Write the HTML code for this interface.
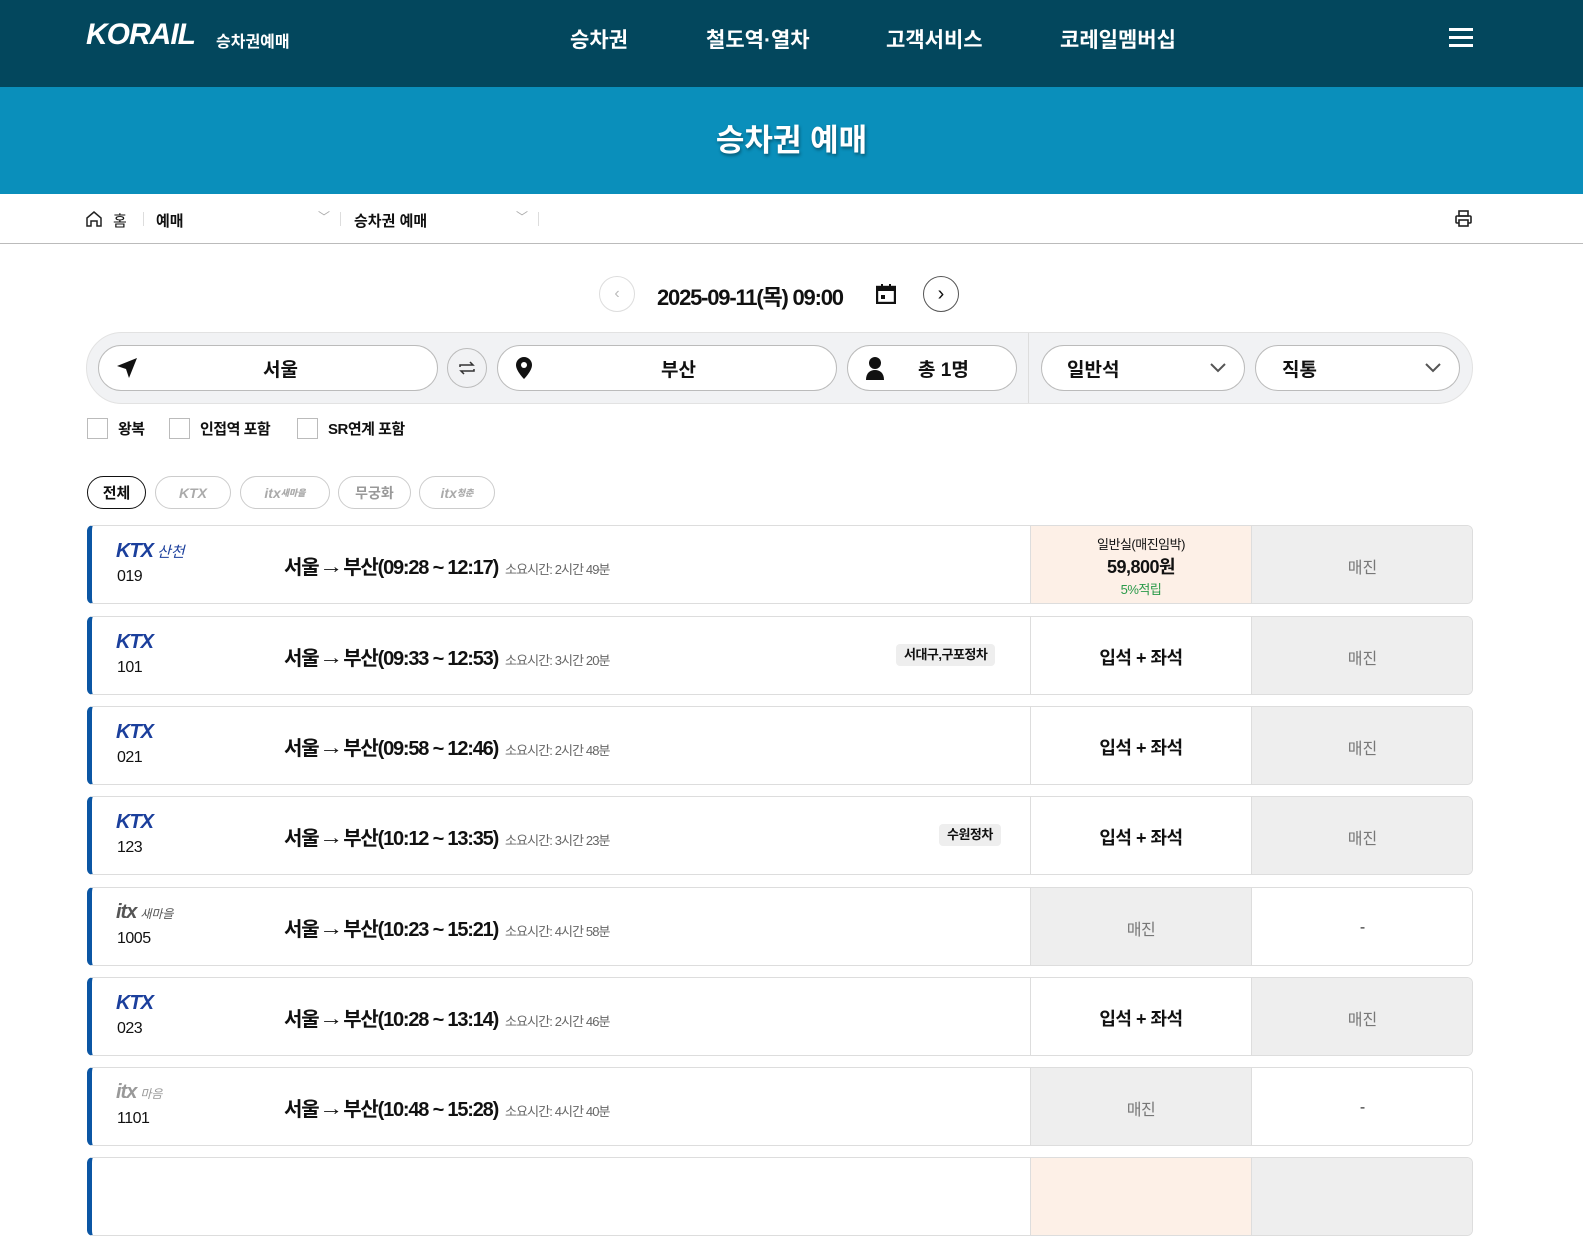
<!DOCTYPE html>
<html><head><meta charset="utf-8"><style>
*{margin:0;padding:0;box-sizing:border-box}
body{width:1583px;height:1172px;overflow:hidden;background:#fff;font-family:"Liberation Sans","Noto Sans CJK KR",sans-serif;color:#111;position:relative}
.abs{position:absolute}
.hdr{left:0;top:0;width:1583px;height:87px;background:#03475d}
.nav{top:24px;font-size:21px;font-weight:bold;color:#fff}
.band{left:0;top:87px;width:1583px;height:107px;background:#0a8fbb;color:#fff;font-size:31px;font-weight:bold;text-align:center;line-height:107px;text-shadow:1px 2px 3px rgba(0,0,0,.4)}
.bc{top:194px;left:0;width:1583px;height:50px;border-bottom:1px solid #bbb}
.bct{top:210px;font-size:15px;font-weight:bold}
.sep{width:1px;height:14px;background:#ddd;top:212px}
.circ{border:1px solid #bbb;border-radius:50%;width:36px;height:36px;display:flex;align-items:center;justify-content:center}
.pill{border:1px solid #bbb;border-radius:24px;background:#fff;height:46px;top:345px;display:flex;align-items:center;font-size:19px;font-weight:bold}
.cb{width:21px;height:21px;border:1px solid #bbb;top:418px}
.cbt{top:418px;font-size:15px;font-weight:bold;letter-spacing:-.5px}
.tag{top:476px;height:33px;border:1px solid #ccc;border-radius:17px;display:flex;align-items:center;justify-content:center;font-size:14px;color:#999;font-weight:bold}
.row{left:87px;width:1386px;height:79px;border:1px solid #ddd;border-left:5px solid #0b56a4;border-radius:6px;background:#fff;overflow:hidden}
.row .no{position:absolute;left:25px;top:42px;font-size:16px;letter-spacing:-.5px}
.row .rt{position:absolute;left:192px;top:25px;font-size:20px;font-weight:bold;letter-spacing:-1.2px}
.row .rt .ar{font-size:20px;display:inline-block;transform:translateY(-1px) scaleX(1.2);margin:0 3px}
.row .rt small{font-size:13px;color:#666;font-weight:normal;margin-left:7px;letter-spacing:-.9px}
.row .c1{position:absolute;left:938px;top:0;width:221px;height:79px;border-left:1px solid #ddd;display:flex;align-items:center;justify-content:center;font-size:18px;font-weight:bold;letter-spacing:-.5px}
.row .c2{position:absolute;left:1159px;top:0;width:222px;height:79px;background:#eee;display:flex;align-items:center;justify-content:center;font-size:16px;color:#777;border-left:1px solid #ddd}
.sold{background:#eee!important;color:#777!important;font-weight:normal!important;font-size:16px!important}
.wh{background:#fff!important;color:#333!important}
.stop{position:absolute;top:27px;height:22px;background:#eee;border-radius:4px;font-size:13px;font-weight:bold;padding:0 8px;line-height:22px;letter-spacing:-.5px}
.ktx{position:absolute;left:24px;top:14px;font:italic 900 20px "Liberation Sans",sans-serif;color:#1b3f9c;letter-spacing:-1px}
.itx{position:absolute;left:24px;top:13px;font:italic 900 20px "Liberation Sans",sans-serif;color:#555;letter-spacing:-1px}
.sub{font-size:12px;font-weight:normal;margin-left:4px;letter-spacing:0}
</style></head><body>
<div class="abs hdr"></div>
<div class="abs" style="left:86px;top:18px;font:italic 900 30px 'Liberation Sans',sans-serif;color:#fff;letter-spacing:-1px">KORAIL</div>
<div class="abs" style="left:216px;top:28px;font-size:16px;font-weight:bold;color:#fff">승차권예매</div>
<div class="abs nav" style="left:570px">승차권</div>
<div class="abs nav" style="left:706px">철도역·열차</div>
<div class="abs nav" style="left:886px">고객서비스</div>
<div class="abs nav" style="left:1060px">코레일멤버십</div>
<div class="abs" style="left:1449px;top:28px;width:24px;height:3px;background:#fff;box-shadow:0 8px 0 #fff,0 16px 0 #fff"></div>
<div class="abs band">승차권 예매</div>
<div class="abs bc"></div>
<svg class="abs" style="left:85px;top:210px" width="18" height="18" viewBox="0 0 18 18" fill="none" stroke="#222" stroke-width="1.5"><path d="M2 8L9 2l7 6v8h-4v-5H6v5H2z"/></svg>
<div class="abs bct" style="left:113px;font-weight:normal">홈</div>
<div class="abs sep" style="left:143px"></div>
<div class="abs bct" style="left:156px">예매</div>
<div class="abs" style="left:318px;top:208px;color:#aaa;font-size:12px">﹀</div>
<div class="abs sep" style="left:340px"></div>
<div class="abs bct" style="left:354px">승차권 예매</div>
<div class="abs" style="left:516px;top:208px;color:#aaa;font-size:12px">﹀</div>
<div class="abs sep" style="left:538px"></div>
<svg class="abs" style="left:1454px;top:209px" width="19" height="19" viewBox="0 0 19 19" fill="none" stroke="#222" stroke-width="1.6"><rect x="5" y="2" width="9" height="5"/><rect x="2" y="7" width="15" height="7" rx="1"/><rect x="5" y="11" width="9" height="6" fill="#fff"/></svg>

<div class="abs circ" style="left:599px;top:276px;border-color:#ddd;color:#bbb">‹</div>
<div class="abs" style="left:657px;top:280px;font-size:22px;font-weight:bold;letter-spacing:-1.2px">2025-09-11(목) 09:00</div>
<svg class="abs" style="left:876px;top:284px" width="20" height="20" viewBox="0 0 20 20"><rect x="1" y="3" width="18" height="16" fill="none" stroke="#111" stroke-width="2.4"/><rect x="1" y="3" width="18" height="4" fill="#111"/><rect x="5" y="0" width="2" height="4" fill="#111"/><rect x="13" y="0" width="2" height="4" fill="#111"/><rect x="5" y="11" width="4" height="4" fill="#111"/></svg>
<div class="abs circ" style="left:923px;top:276px;border-color:#555;font-size:20px">›</div>

<div class="abs" style="left:86px;top:332px;width:1387px;height:72px;background:#f1f2f4;border:1px solid #e2e2e2;border-radius:36px"></div>
<div class="abs" style="left:1028px;top:333px;width:1px;height:70px;background:#ddd"></div>
<div class="abs pill" style="left:98px;width:340px"><svg style="margin-left:16px" width="24" height="24" viewBox="0 0 24 24"><path d="M22 2L2 10l9 3 3 9z" fill="#111"/></svg><span style="margin-left:124px">서울</span></div>
<div class="abs circ" style="left:447px;top:348px;width:40px;height:40px"><svg width="20" height="20" viewBox="0 0 20 20" fill="none" stroke="#333" stroke-width="1.5"><path d="M3 9V7h13l-3-3M17 11v2H4l3 3"/></svg></div>
<div class="abs pill" style="left:497px;width:340px"><svg style="margin-left:14px" width="24" height="24" viewBox="0 0 24 24"><path d="M12 1a8 8 0 00-8 8c0 6 8 14 8 14s8-8 8-14a8 8 0 00-8-8z" fill="#111"/><circle cx="12" cy="9" r="3" fill="#fff"/></svg><span style="margin-left:125px">부산</span></div>
<div class="abs pill" style="left:847px;width:170px"><svg style="margin-left:16px" width="22" height="24" viewBox="0 0 22 24"><circle cx="11" cy="7" r="6" fill="#111"/><path d="M2 24c0-7 4-10 9-10s9 3 9 10z" fill="#111"/></svg><span style="margin-left:32px">총 1명</span></div>
<div class="abs pill" style="left:1041px;width:204px;padding-left:25px;justify-content:space-between;padding-right:18px;font-weight:bold"><span>일반석</span><svg width="16" height="10" viewBox="0 0 16 10" fill="none" stroke="#555" stroke-width="2"><path d="M1 1l7 7 7-7"/></svg></div>
<div class="abs pill" style="left:1255px;width:205px;padding-left:26px;justify-content:space-between;padding-right:18px"><span>직통</span><svg width="16" height="10" viewBox="0 0 16 10" fill="none" stroke="#555" stroke-width="2"><path d="M1 1l7 7 7-7"/></svg></div>

<div class="abs cb" style="left:87px"></div><div class="abs cbt" style="left:118px">왕복</div>
<div class="abs cb" style="left:169px"></div><div class="abs cbt" style="left:200px">인접역 포함</div>
<div class="abs cb" style="left:297px"></div><div class="abs cbt" style="left:328px">SR연계 포함</div>

<div class="abs tag" style="left:87px;width:59px;border-color:#111;color:#111;font-size:15px">전체</div>
<div class="abs tag" style="left:155px;width:76px;font-style:italic;font-weight:900;color:#aaa">KTX</div>
<div class="abs tag" style="left:240px;width:90px;font-style:italic;font-weight:900;color:#aaa">itx<span style="font-size:9px">새마을</span></div>
<div class="abs tag" style="left:338px;width:73px">무궁화</div>
<div class="abs tag" style="left:419px;width:76px;font-style:italic;font-weight:900;color:#aaa">itx<span style="font-size:9px">청춘</span></div>

<div class="abs row" style="top:525px"><div class="ktx">KTX<span class="sub" style="font-size:15px">산천</span></div><div class="no">019</div><div class="rt">서울<span class="ar">→</span>부산(09:28 ~ 12:17)<small>소요시간: 2시간 49분</small></div>
<div class="c1" style="background:#fdf0e7;flex-direction:column;font-weight:normal"><div style="font-size:13px">일반실(매진임박)</div><div style="font-size:18px;font-weight:bold">59,800원</div><div style="font-size:13px;color:#2a9a4a">5%적립</div></div><div class="c2">매진</div></div>

<div class="abs row" style="top:616px"><div class="ktx">KTX</div><div class="no">101</div><div class="rt">서울<span class="ar">→</span>부산(09:33 ~ 12:53)<small>소요시간: 3시간 20분</small></div><div class="stop" style="left:804px">서대구,구포정차</div><div class="c1">입석 + 좌석</div><div class="c2">매진</div></div>

<div class="abs row" style="top:706px"><div class="ktx">KTX</div><div class="no">021</div><div class="rt">서울<span class="ar">→</span>부산(09:58 ~ 12:46)<small>소요시간: 2시간 48분</small></div><div class="c1">입석 + 좌석</div><div class="c2">매진</div></div>

<div class="abs row" style="top:796px"><div class="ktx">KTX</div><div class="no">123</div><div class="rt">서울<span class="ar">→</span>부산(10:12 ~ 13:35)<small>소요시간: 3시간 23분</small></div><div class="stop" style="left:847px">수원정차</div><div class="c1">입석 + 좌석</div><div class="c2">매진</div></div>

<div class="abs row" style="top:887px"><div class="itx">itx<span class="sub">새마을</span></div><div class="no">1005</div><div class="rt">서울<span class="ar">→</span>부산(10:23 ~ 15:21)<small>소요시간: 4시간 58분</small></div><div class="c1 sold">매진</div><div class="c2 wh">-</div></div>

<div class="abs row" style="top:977px"><div class="ktx">KTX</div><div class="no">023</div><div class="rt">서울<span class="ar">→</span>부산(10:28 ~ 13:14)<small>소요시간: 2시간 46분</small></div><div class="c1">입석 + 좌석</div><div class="c2">매진</div></div>

<div class="abs row" style="top:1067px"><div class="itx" style="color:#999">itx<span class="sub">마음</span></div><div class="no">1101</div><div class="rt">서울<span class="ar">→</span>부산(10:48 ~ 15:28)<small>소요시간: 4시간 40분</small></div><div class="c1 sold">매진</div><div class="c2 wh">-</div></div>

<div class="abs row" style="top:1157px"><div class="c1" style="background:#fdf0e7"></div><div class="c2"></div></div>
</body></html>
